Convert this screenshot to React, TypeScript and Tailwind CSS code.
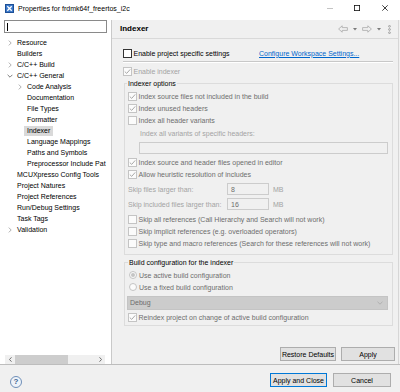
import React from "react";

function Check({ checked, enabled }: { checked?: boolean; enabled?: boolean }) {
  return (
    <span
      className={
        enabled
          ? "w-[9px] h-[9px] border border-[#333333] bg-white flex items-center justify-center shrink-0"
          : "w-[9px] h-[9px] border border-[#c4c4c4] bg-[#fbfbfb] flex items-center justify-center shrink-0"
      }
    >
      {checked && (
        <svg width="7" height="7" viewBox="0 0 7 7">
          <path d="M0.8 3.6 L2.7 5.4 L6.2 1.4" stroke="#a9a9a9" strokeWidth="1" fill="none" />
        </svg>
      )}
    </span>
  );
}

function Radio({ selected }: { selected?: boolean }) {
  return (
    <span className="w-[8px] h-[8px] rounded-full border border-[#c4c4c4] bg-[#fbfbfb] flex items-center justify-center shrink-0">
      {selected && <span className="w-[4px] h-[4px] rounded-full bg-[#c4c4c4]" />}
    </span>
  );
}

function Chevron({ dir }: { dir: "r" | "d" }) {
  if (dir === "r")
    return (
      <svg width="4" height="6" viewBox="0 0 4 6">
        <path d="M0.8 0.6 L3.2 3 L0.8 5.4" stroke="#a6a6a6" strokeWidth="0.9" fill="none" />
      </svg>
    );
  return (
    <svg width="6" height="4" viewBox="0 0 6 4">
      <path d="M0.6 0.8 L3 3.2 L5.4 0.8" stroke="#6f6f6f" strokeWidth="0.9" fill="none" />
    </svg>
  );
}

const tree: { t: string; l: number; a?: "r" | "d"; sel?: boolean }[] = [
  { t: "Resource", l: 0, a: "r" },
  { t: "Builders", l: 0 },
  { t: "C/C++ Build", l: 0, a: "r" },
  { t: "C/C++ General", l: 0, a: "d" },
  { t: "Code Analysis", l: 1, a: "r" },
  { t: "Documentation", l: 1 },
  { t: "File Types", l: 1 },
  { t: "Formatter", l: 1 },
  { t: "Indexer", l: 1, sel: true },
  { t: "Language Mappings", l: 1 },
  { t: "Paths and Symbols", l: 1 },
  { t: "Preprocessor Include Pat", l: 1 },
  { t: "MCUXpresso Config Tools", l: 0 },
  { t: "Project Natures", l: 0 },
  { t: "Project References", l: 0 },
  { t: "Run/Debug Settings", l: 0 },
  { t: "Task Tags", l: 0 },
  { t: "Validation", l: 0, a: "r" },
];

function AppIcon() {
  return (
    <svg width="9" height="9" viewBox="0 0 9 9">
      <rect x="0.5" y="0.5" width="8" height="8" fill="#3b78c9" stroke="#1d4f96" />
      <path d="M2.3 2.3 L6.7 6.7 M6.7 2.3 L2.3 6.7" stroke="#ffffff" strokeWidth="1.3" />
    </svg>
  );
}

function Btn({ label, w, primary }: { label: string; w: string; primary?: boolean }) {
  return (
    <div
      className={
        (primary ? "border-[#0078d7] " : "border-[#adadad] ") +
        w +
        " h-[14px] border bg-[#e1e1e1] flex items-center justify-center text-[7px] text-black"
      }
    >
      {label}
    </div>
  );
}

export default function App() {
  const dark = "text-[#6d6d6d]";
  const light = "text-[#a3a3a3]";
  return (
    <div className="w-[400px] h-[392px] bg-[#f0f0f0] flex flex-col overflow-hidden font-['Liberation_Sans',Arial,sans-serif] text-[7px] leading-none text-black">
      {/* Title bar */}
      <div className="h-[20px] bg-white flex items-start pt-[4px] shrink-0">
        <div className="ml-[5px]">
          <AppIcon />
        </div>
        <span className="ml-[4px] h-[9px] flex items-center">Properties for frdmk64f_freertos_i2c</span>
        <div className="ml-auto mr-[12px] h-[7px] flex items-center gap-[21px]">
          <svg width="6" height="6" viewBox="0 0 6 6">
            <path d="M0 3.5 H6" stroke="#b5b5b5" strokeWidth="0.8" />
          </svg>
          <svg width="6" height="6" viewBox="0 0 6 6">
            <rect x="0.4" y="0.4" width="5.2" height="5.2" fill="none" stroke="#111" strokeWidth="0.8" />
          </svg>
          <svg width="6" height="6" viewBox="0 0 6 6" className="ml-[1px]">
            <path d="M0.3 0.3 L5.7 5.7 M5.7 0.3 L0.3 5.7" stroke="#111" strokeWidth="0.8" />
          </svg>
        </div>
      </div>

      {/* Main area */}
      <div className="h-[344px] flex shrink-0">
        {/* Left panel */}
        <div className="w-[112px] bg-white border-r border-[#c9c9c9] flex flex-col shrink-0">
          <div className="ml-[4px] w-[103px] h-[13px] border border-[#8a8a8a] bg-white flex items-center">
            <span className="ml-[2px] w-[1px] h-[8px] bg-black" />
          </div>
          <div className="ml-[5px] w-[101px] mt-[4px]">
            {tree.map((it) => (
              <div key={it.t} className="h-[11px] flex items-center whitespace-nowrap">
                <div className={it.l === 0 ? "w-[3px] shrink-0" : "w-[13px] shrink-0"} />
                <div className="w-[9px] shrink-0 flex items-center">
                  {it.a === "r" && <Chevron dir="r" />}
                  {it.a === "d" && (
                    <span className="-ml-[1px]">
                      <Chevron dir="d" />
                    </span>
                  )}
                </div>
                {it.sel ? (
                  <span className="-ml-[3px] px-[3px] h-[10px] flex items-center bg-[#d9d9d9]">{it.t}</span>
                ) : (
                  <span>{it.t}</span>
                )}
              </div>
            ))}
          </div>
          <div className="flex-1" />
          <div className="ml-[5px] w-[100px] h-[9px] bg-[#f0f0f0] flex items-center">
            <div className="w-[10px] flex items-center justify-center">
              <svg width="3" height="5" viewBox="0 0 3 5">
                <path d="M2.5 0.3 L0.5 2.5 L2.5 4.7" stroke="#606060" strokeWidth="0.9" fill="none" />
              </svg>
            </div>
            <div className="w-[53px] h-[9px] bg-[#cdcdcd]" />
            <div className="flex-1" />
            <div className="w-[10px] flex items-center justify-center">
              <svg width="3" height="5" viewBox="0 0 3 5">
                <path d="M0.5 0.3 L2.5 2.5 L0.5 4.7" stroke="#606060" strokeWidth="0.9" fill="none" />
              </svg>
            </div>
          </div>
        </div>

        {/* Right panel */}
        <div className="flex-1 mr-[1px] border-r border-[#d6d6d6] flex flex-col">
          {/* header */}
          <div className="h-[19px] border-b border-[#d9d9d9] flex items-center shrink-0">
            <span className="ml-[8px] text-[8px] font-bold">Indexer</span>
            <div className="ml-auto mr-[7px] flex items-center">
              <svg width="10" height="8" viewBox="0 0 10 8">
                <path d="M0.6 4 L4.2 0.8 V2.6 H9.4 V5.4 H4.2 V7.2 Z" fill="none" stroke="#a9a9a9" strokeWidth="0.8" />
              </svg>
              <svg width="4" height="3" viewBox="0 0 4 3" className="ml-[5px]">
                <path d="M0 0 H4 L2 2.5 Z" fill="#7a7a7a" />
              </svg>
              <svg width="10" height="8" viewBox="0 0 10 8" className="ml-[5px]">
                <path d="M9.4 4 L5.8 0.8 V2.6 H0.6 V5.4 H5.8 V7.2 Z" fill="none" stroke="#a9a9a9" strokeWidth="0.8" />
              </svg>
              <svg width="4" height="3" viewBox="0 0 4 3" className="ml-[5px]">
                <path d="M0 0 H4 L2 2.5 Z" fill="#7a7a7a" />
              </svg>
              <svg width="3" height="9" viewBox="0 0 3 9" className="ml-[7px]">
                <circle cx="1.5" cy="1.3" r="0.9" fill="none" stroke="#8a8a8a" strokeWidth="0.7" />
                <circle cx="1.5" cy="4.5" r="0.9" fill="none" stroke="#8a8a8a" strokeWidth="0.7" />
                <circle cx="1.5" cy="7.7" r="0.9" fill="none" stroke="#8a8a8a" strokeWidth="0.7" />
              </svg>
            </div>
          </div>

          {/* content */}
          <div className="flex-1 flex flex-col pl-[11px] pr-[5px]">
            <div className="mt-[8px] h-[12px] flex items-center">
              <div className="w-[136px] flex items-center gap-[1.5px]">
                <Check enabled />
                <span>Enable project specific settings</span>
              </div>
              <span className="text-[#0066cc] underline">Configure Workspace Settings...</span>
            </div>
            <div className="mt-[2px] h-[2px] border-t border-[#c8c8c8] border-b border-b-white" />
            <div className="mt-[2px] h-[12px] flex items-center gap-[1.5px]">
              <Check checked />
              <span className={light}>Enable indexer</span>
            </div>

            {/* Group 1 */}
            <div className="mt-[6px] ml-[1px] border border-[#dcdcdc] relative pt-[6px] pb-[5px] pl-[3px] pr-[4px]">
              <span className="absolute left-[2px] top-[-6px] h-[10px] px-[1px] bg-[#f0f0f0] flex items-center">Indexer options</span>
              <div className="h-[12px] flex items-center gap-[1.5px]">
                <Check checked />
                <span className={dark}>Index source files not included in the build</span>
              </div>
              <div className="h-[12.5px] flex items-center gap-[1.5px]">
                <Check checked />
                <span className={dark}>Index unused headers</span>
              </div>
              <div className="h-[12.5px] flex items-center gap-[1.5px]">
                <Check />
                <span className={dark}>Index all header variants</span>
              </div>
              <div className={"h-[13px] flex items-center pl-[12px] " + light}>Index all variants of specific headers:</div>
              <div className="mt-[2px] ml-[11px] h-[12px] border border-[#cccccc] bg-[#f0f0f0]" />
              <div className="mt-[2px] h-[12px] flex items-center gap-[1.5px]">
                <Check checked />
                <span className={dark}>Index source and header files opened in editor</span>
              </div>
              <div className="h-[12.5px] flex items-center gap-[1.5px]">
                <Check checked />
                <span className={dark}>Allow heuristic resolution of includes</span>
              </div>
              <div className="mt-[2.5px] h-[12px] flex items-center">
                <span className={"w-[99px] " + light}>Skip files larger than:</span>
                <div className={"w-[42px] h-[12px] border border-[#cccccc] bg-[#f0f0f0] flex items-center pl-[3px] " + dark}>8</div>
                <span className={"ml-[4px] " + light}>MB</span>
              </div>
              <div className="mt-[3px] h-[12px] flex items-center">
                <span className={"w-[99px] " + light}>Skip included files larger than:</span>
                <div className={"w-[42px] h-[12px] border border-[#cccccc] bg-[#f0f0f0] flex items-center pl-[3px] " + dark}>16</div>
                <span className={"ml-[4px] " + light}>MB</span>
              </div>
              <div className="mt-[3px] h-[12px] flex items-center gap-[1.5px]">
                <Check />
                <span className={dark}>Skip all references (Call Hierarchy and Search will not work)</span>
              </div>
              <div className="h-[12px] flex items-center gap-[1.5px]">
                <Check />
                <span className={dark}>Skip implicit references (e.g. overloaded operators)</span>
              </div>
              <div className="h-[12px] flex items-center gap-[1.5px]">
                <Check />
                <span className={dark}>Skip type and macro references (Search for these references will not work)</span>
              </div>
            </div>

            {/* Group 2 */}
            <div className="mt-[7px] ml-[1px] border border-[#dcdcdc] relative pt-[6px] pb-[2px] pl-[3px] pr-[4px]">
              <span className="absolute left-[3px] top-[-6px] h-[10px] px-[1px] bg-[#f0f0f0] flex items-center">Build configuration for the indexer</span>
              <div className="h-[12px] flex items-center gap-[2px] pl-[1px]">
                <Radio selected />
                <span className={dark}>Use active build configuration</span>
              </div>
              <div className="h-[12px] flex items-center gap-[2px] pl-[1px]">
                <Radio />
                <span className={dark}>Use a fixed build configuration</span>
              </div>
              <div className="mt-[2.5px] -ml-[1px] h-[14px] bg-[#cccccc] border border-[#c4c4c4] flex items-center pl-[2px] pr-[4px]">
                <span className={dark}>Debug</span>
                <svg width="6" height="4" viewBox="0 0 6 4" className="ml-auto">
                  <path d="M0.5 0.8 L3 3.2 L5.5 0.8" stroke="#a8a8a8" strokeWidth="0.8" fill="none" />
                </svg>
              </div>
              <div className="mt-[1.5px] h-[12px] flex items-center gap-[1.5px]">
                <Check checked />
                <span className={dark}>Reindex project on change of active build configuration</span>
              </div>
            </div>

            <div className="flex-1" />
          </div>
          <div className="h-[15px] mb-[2px] flex justify-end gap-[5px] pr-[3px] shrink-0">
            <Btn label="Restore Defaults" w="w-[56px]" />
            <Btn label="Apply" w="w-[54px]" />
          </div>
        </div>
      </div>

      {/* Bottom bar */}
      <div className="flex-1 border-t border-[#bdbdbd] flex items-start">
        <div className="ml-[10px] mt-[11px] w-[12px] h-[12px] rounded-full border border-[#6f8fb8] bg-[#eef3f9] flex items-center justify-center text-[8px] font-bold text-[#3d5f8f]">
          ?
        </div>
        <div className="ml-auto mr-[9px] mt-[8px] flex gap-[6px]">
          <Btn label="Apply and Close" w="w-[57px]" primary />
          <Btn label="Cancel" w="w-[58px]" />
        </div>
      </div>
    </div>
  );
}
